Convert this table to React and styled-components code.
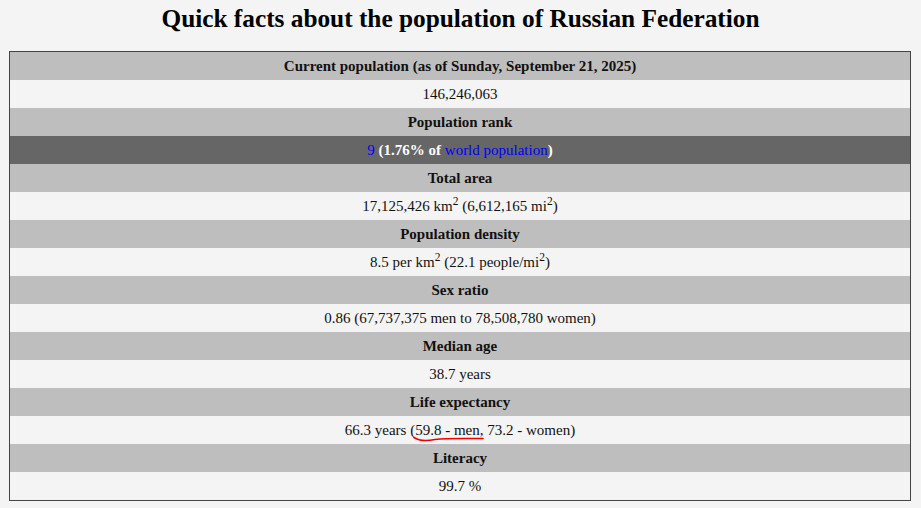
import React from 'react';
import styled, { createGlobalStyle } from 'styled-components';

const GlobalStyle = createGlobalStyle`
  body {
    margin: 0;
    background: #f4f4f4;
    font-family: 'Liberation Serif', 'Times New Roman', serif;
    color: #111;
  }
`;

const Page = styled.div`
  padding-top: 1px;
`;

const Title = styled.h1`
  margin: 3px 0 19px;
  text-align: center;
  font-size: 25.3px;
  font-weight: bold;
  line-height: 28px;
  color: #000;
`;

const Table = styled.table`
  width: 902px;
  margin: 0 0 0 9px;
  border-collapse: collapse;
  border: 1px solid #444;
  font-size: 15px;
`;

const Cell = styled.td`
  height: 28px;
  padding: 0;
  text-align: center;
  vertical-align: middle;
  font-weight: ${(p) => (p.$head || p.$dark ? 'bold' : 'normal')};
  background: ${(p) => (p.$dark ? '#666666' : p.$head ? '#bebebe' : '#f4f4f4')};
  color: ${(p) => (p.$dark ? '#fff' : '#111')};
`;

const Link = styled.a`
  color: #0000ff;
  font-weight: normal;
  text-decoration: none;
`;

const Sup = styled.sup`
  font-size: 11.5px;
  line-height: 0;
  vertical-align: 6px;
`;

const Marked = styled.span`
  position: relative;
`;

const Squiggle = styled.svg`
  position: absolute;
  left: -2px;
  bottom: -5px;
  width: 72px;
  height: 7px;
  overflow: visible;
`;

const rows = [
  ['Current population (as of Sunday, September 21, 2025)', '146,246,063'],
  ['Population rank', 'rank'],
  ['Total area', 'area'],
  ['Population density', 'density'],
  ['Sex ratio', '0.86 (67,737,375 men to 78,508,780 women)'],
  ['Median age', '38.7 years'],
  ['Life expectancy', 'life'],
  ['Literacy', '99.7 %'],
];

const renderValue = (v) => {
  if (v === 'area')
    return (
      <>
        17,125,426 km<Sup>2</Sup> (6,612,165 mi<Sup>2</Sup>)
      </>
    );
  if (v === 'density')
    return (
      <>
        8.5 per km<Sup>2</Sup> (22.1 people/mi<Sup>2</Sup>)
      </>
    );
  if (v === 'life')
    return (
      <>
        66.3 years (
        <Marked>
          59.8 - men,
          <Squiggle viewBox="0 0 72 7">
            <path d="M1 1.5 C 6 5, 14 5, 22 3.5 C 34 2, 50 2.5, 70 2.5" stroke="#e00" strokeWidth="1.6" fill="none" strokeLinecap="round" />
          </Squiggle>
        </Marked>{' '}
        73.2 - women)
      </>
    );
  return v;
};

const App = () => (
  <Page>
    <GlobalStyle />
    <Title>Quick facts about the population of Russian Federation</Title>
    <Table>
      <tbody>
        {rows.map(([label, value]) => (
          <React.Fragment key={label}>
            <tr>
              <Cell $head>{label}</Cell>
            </tr>
            <tr>
              {value === 'rank' ? (
                <Cell $dark>
                  <Link href="#">9</Link> (1.76% of <Link href="#">world population</Link>)
                </Cell>
              ) : (
                <Cell>{renderValue(value)}</Cell>
              )}
            </tr>
          </React.Fragment>
        ))}
      </tbody>
    </Table>
  </Page>
);

export default App;
